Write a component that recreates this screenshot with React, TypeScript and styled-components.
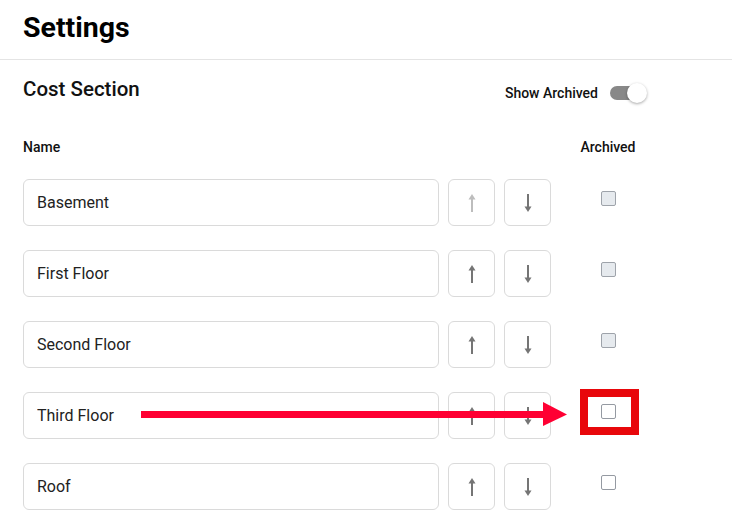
import React from 'react';
import styled, { createGlobalStyle } from 'styled-components';

const GlobalStyle = createGlobalStyle`
  html, body {
    margin: 0;
    padding: 0;
    background: #fff;
  }
  body {
    font-family: Roboto, "Liberation Sans", sans-serif;
    color: #111;
  }
`;

const rows = [
  { name: 'Basement', first: true, archivedDisabled: true },
  { name: 'First Floor', first: false, archivedDisabled: true },
  { name: 'Second Floor', first: false, archivedDisabled: true },
  { name: 'Third Floor', first: false, archivedDisabled: false },
  { name: 'Roof', first: false, archivedDisabled: false },
];

const MoveIcon = ({ dir }: { dir: 'up' | 'down' }) => (
  <svg width="10" height="18" viewBox="0 0 10 18">
    {dir === 'up' ? (
      <>
        <rect x="4" y="4" width="2" height="14" fill="currentColor" />
        <path d="M5 0 L8.5 5.5 L1.5 5.5 Z" fill="currentColor" />
      </>
    ) : (
      <>
        <rect x="4" y="0" width="2" height="14" fill="currentColor" />
        <path d="M5 18 L8.5 12.5 L1.5 12.5 Z" fill="currentColor" />
      </>
    )}
  </svg>
);

const App = () => {
  return (
    <Page>
      <GlobalStyle />
      <Header>
        <Title>Settings</Title>
      </Header>
      <Section>
        <SectionTop>
          <SectionTitle>Cost Section</SectionTitle>
          <ToggleLabel>
            Show Archived
            <Toggle>
              <Knob />
            </Toggle>
          </ToggleLabel>
        </SectionTop>
        <Table>
          <HeadCell>Name</HeadCell>
          <span />
          <span />
          <HeadCell $center>Archived</HeadCell>
          {rows.map((row) => (
            <React.Fragment key={row.name}>
              <NameInput defaultValue={row.name} />
              <MoveButton $disabled={row.first}>
                <MoveIcon dir="up" />
              </MoveButton>
              <MoveButton>
                <MoveIcon dir="down" />
              </MoveButton>
              <CheckCell>
                <Checkbox $disabled={row.archivedDisabled} />
              </CheckCell>
            </React.Fragment>
          ))}
        </Table>
      </Section>

      <Annotation width="430" height="26" viewBox="0 0 430 26">
        <rect x="0" y="9" width="404" height="7" fill="#ff0033" />
        <path d="M402 0 L426 12.5 L402 24 Z" fill="#ff0033" />
      </Annotation>
      <Highlight />
    </Page>
  );
};

export default App;

const Page = styled.div`
  position: relative;
  width: 732px;
  height: 523px;
  overflow: hidden;
`;

const Header = styled.div`
  height: 60px;
  padding: 0 23px;
  border-bottom: 1px solid #e4e4e4;
  box-sizing: border-box;
  display: flex;
  align-items: flex-start;
`;

const Title = styled.h1`
  margin: 11px 0 0;
  font-size: 28.5px;
  font-weight: 700;
  line-height: 34px;
  color: #000;
`;

const Section = styled.div`
  padding: 0 23px;
`;

const SectionTop = styled.div`
  width: 621px;
  display: flex;
  justify-content: space-between;
  align-items: center;
  margin-top: 21px;
`;

const SectionTitle = styled.h2`
  margin: 0;
  font-size: 20.5px;
  font-weight: 500;
  line-height: 24px;
  color: #111;
  position: relative;
  top: -4px;
`;

const ToggleLabel = styled.div`
  display: flex;
  align-items: center;
  gap: 12px;
  font-size: 14px;
  font-weight: 500;
  color: #111;
`;

const Toggle = styled.div`
  position: relative;
  width: 34px;
  height: 14px;
  border-radius: 7px;
  background: #888;
`;

const Knob = styled.div`
  position: absolute;
  right: -3px;
  top: -3px;
  width: 20px;
  height: 20px;
  border-radius: 50%;
  background: #fff;
  box-shadow: 0 1px 3px rgba(0, 0, 0, 0.35);
`;

const Table = styled.div`
  display: grid;
  grid-template-columns: 416px 47px 47px 96px;
  grid-template-rows: 16px;
  grid-auto-rows: 47px;
  column-gap: 9px;
  row-gap: 24px;
  margin-top: 34px;
`;

const HeadCell = styled.div<{ $center?: boolean }>`
  font-size: 14px;
  font-weight: 500;
  line-height: 16px;
  color: #111;
  text-align: ${(p) => (p.$center ? 'center' : 'left')};
`;

const NameInput = styled.input`
  box-sizing: border-box;
  height: 47px;
  width: 100%;
  border: 1px solid #dadada;
  border-radius: 6px;
  padding: 0 13px;
  font-family: Roboto, "Liberation Sans", sans-serif;
  font-size: 16px;
  color: #222;
  background: #fff;
  outline: none;
`;

const MoveButton = styled.div<{ $disabled?: boolean }>`
  box-sizing: border-box;
  height: 47px;
  border: 1px solid #dadada;
  border-radius: 6px;
  display: flex;
  align-items: center;
  justify-content: center;
  color: ${(p) => (p.$disabled ? '#bdbdbd' : '#757575')};
`;

const CheckCell = styled.div`
  display: flex;
  justify-content: center;
  padding-top: 12px;
`;

const Checkbox = styled.div<{ $disabled?: boolean }>`
  box-sizing: border-box;
  width: 15px;
  height: 15px;
  border: 1.5px solid ${(p) => (p.$disabled ? '#9ea3aa' : '#959aa2')};
  border-radius: 2px;
  background: ${(p) => (p.$disabled ? '#e6eaee' : '#fff')};
`;

const Annotation = styled.svg`
  position: absolute;
  left: 141px;
  top: 402px;
`;

const Highlight = styled.div`
  position: absolute;
  left: 580px;
  top: 389px;
  width: 59px;
  height: 46px;
  box-sizing: border-box;
  border: 8px solid #e8070b;
`;
